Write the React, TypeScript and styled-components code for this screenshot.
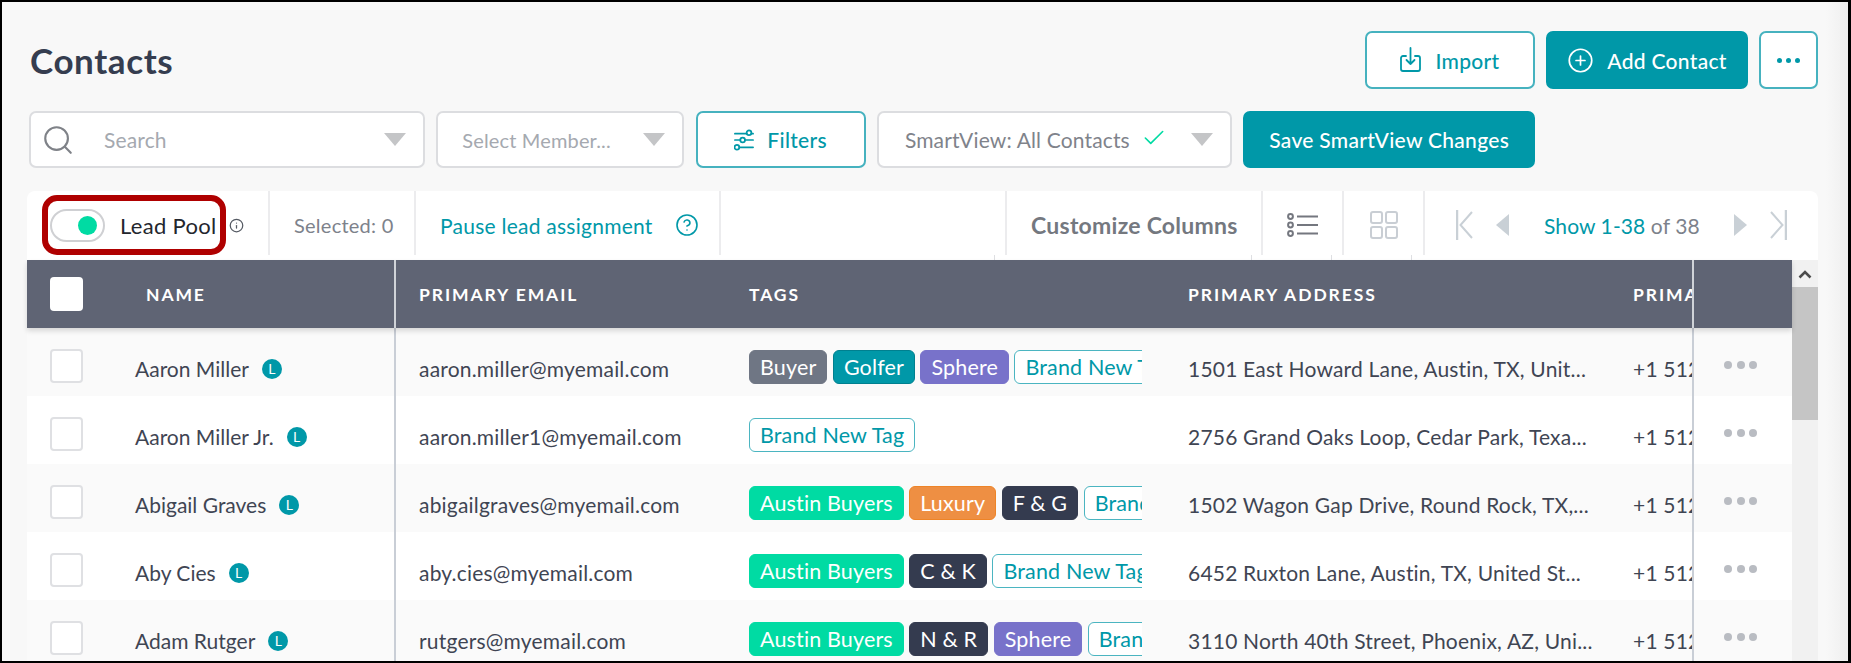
import React from "react";
import styled, { createGlobalStyle } from "styled-components";
import { Search, Check, CirclePlus, CircleHelp, Info } from "lucide-react";

const TEAL = "#0098a8";
const FONT = `"Lato", "Open Sans", sans-serif`;

const GlobalStyle = createGlobalStyle`
  html, body { margin: 0; padding: 0; background: #000; }
  * { box-sizing: border-box; }
`;

const Frame = styled.div`
  width: 1851px;
  height: 663px;
  border: solid #000;
  border-width: 2px 3px 2px 2px;
  background: linear-gradient(90deg, #f8f8f8 98.8%, #efefef 100%);
  overflow: hidden;
  font-family: ${FONT};
  display: flex;
  flex-direction: column;
`;

const TitleRow = styled.div`
  display: flex;
  align-items: center;
  justify-content: space-between;
  height: 58px;
  margin: 29px 30px 0 28px;
`;

const Title = styled.h1`
  margin: 0;
  font-size: 35px;
  font-weight: 700;
  color: #353d4f;
  letter-spacing: 0.6px;
`;

const ActionGroup = styled.div`
  display: flex;
  gap: 11px;
`;

const Button = styled.button<{ $w: number; $solid?: boolean; $h?: number }>`
  width: ${(p) => p.$w}px;
  height: ${(p) => p.$h ?? 58}px;
  display: flex;
  align-items: center;
  justify-content: center;
  gap: 13px;
  border: 2px solid ${(p) => (p.$solid ? TEAL : "#46b2bf")};
  border-radius: 7px;
  background: ${(p) => (p.$solid ? TEAL : "#fff")};
  color: ${(p) => (p.$solid ? "#fff" : TEAL)};
  font-family: ${FONT};
  font-size: 21px;
  font-weight: 500;
  letter-spacing: 0.3px;
  padding: 0;
`;

const DotsIcon = styled.span`
  display: flex;
  gap: 4px;
  i {
    width: 5px;
    height: 5px;
    border-radius: 50%;
    background: ${TEAL};
  }
`;

const FilterRow = styled.div`
  display: flex;
  align-items: center;
  gap: 11.3px;
  height: 57px;
  margin: 22px 0 0 27px;
`;

const Select = styled.div<{ $w: number }>`
  width: ${(p) => p.$w}px;
  height: 57px;
  display: flex;
  align-items: center;
  background: #fff;
  border: 2px solid #dcdde0;
  border-radius: 7px;
  padding: 0 17px 0 10px;
`;

const Placeholder = styled.span<{ $dark?: boolean }>`
  font-size: 21px;
  color: ${(p) => (p.$dark ? "#7f838b" : "#a5a9b0")};
  letter-spacing: 0.15px;
`;

const Caret = styled.span`
  margin-left: auto;
  width: 0;
  height: 0;
  border-left: 11.5px solid transparent;
  border-right: 11.5px solid transparent;
  border-top: 13px solid #c4c5c7;
`;

const Panel = styled.div`
  width: 1791px;
  margin: 23px 0 0 25px;
  background: #fff;
  border-radius: 8px 8px 0 0;
  flex: 1;
  min-height: 0;
`;

const Toolbar = styled.div`
  position: relative;
  display: flex;
  height: 64px;
  margin-left: 2px;
  margin-bottom: 5px;
`;

const ToolCell = styled.div<{ $w: number; $open?: boolean }>`
  width: ${(p) => p.$w}px;
  flex: none;
  display: flex;
  align-items: center;
  padding-top: 4px;
  border-right: ${(p) => (p.$open ? "none" : "2px solid #ececee")};
`;

const ToolTick = styled.span<{ $x: number }>`
  position: absolute;
  top: 64px;
  left: ${(p) => p.$x}px;
  width: 1px;
  height: 5px;
  background: #dedfe2;
`;

const Toggle = styled.span`
  position: relative;
  width: 55px;
  height: 33px;
  margin: 0 15px 0 21px;
  border: 2px solid #cfd0d3;
  border-radius: 17px;
  background: #fff;
  &::after {
    content: "";
    position: absolute;
    top: 5px;
    right: 6px;
    width: 19px;
    height: 19px;
    border-radius: 50%;
    background: #00dba3;
    box-shadow: 0 0 0 5px #fff;
  }
`;

const LeadLabel = styled.span`
  font-size: 22px;
  color: #23262d;
  letter-spacing: 0.3px;
  margin-right: 13px;
`;

const Highlight = styled.span`
  position: absolute;
  left: 13px;
  top: 4px;
  width: 184px;
  height: 60px;
  border: 6px solid #af0000;
  border-radius: 15px;
  pointer-events: none;
`;

const Muted = styled.span`
  font-size: 20px;
  color: #7d828b;
  letter-spacing: 0.25px;
`;

const TealText = styled.span`
  font-size: 21px;
  color: ${TEAL};
  letter-spacing: 0.25px;
`;

const Customize = styled.span`
  font-size: 23px;
  font-weight: 700;
  color: #74787f;
  letter-spacing: 0.25px;
`;

const Body = styled.div`
  display: flex;
  height: 500px;
`;

const Table = styled.div`
  width: 1765px;
  flex: none;
`;

const Columns = styled.div<{ $kind: "head" | "odd" | "even" }>`
  display: grid;
  grid-template-columns: 369px 330px 439px 445px 84px 98px;
  height: 68px;
  background: ${(p) => (p.$kind === "head" ? "#5f6474" : p.$kind === "odd" ? "#fafafa" : "#fff")};
  ${(p) => p.$kind === "head" && "position: relative; box-shadow: 0 3px 5px rgba(0,0,0,.14);"}
`;

const Cell = styled.div<{ $head?: boolean; $divider?: boolean }>`
  display: flex;
  align-items: center;
  min-width: 0;
  overflow: hidden;
  white-space: nowrap;
  padding-left: 23px;
  padding-top: ${(p) => (p.$head ? "0" : "13px")};
  font-size: 21px;
  color: #3f4553;
  letter-spacing: 0.2px;
  ${(p) => p.$divider && `border-right: 2px solid ${p.$head ? "#d0d3d8" : "#c9ced6"};`}
`;

const HeadText = styled.span`
  font-size: 17.5px;
  font-weight: 700;
  color: #fff;
  letter-spacing: 1.9px;
`;

const Box = styled.span<{ $head?: boolean }>`
  flex: none;
  width: 33px;
  height: 34px;
  margin-top: ${(p) => (p.$head ? "0" : "-5px")};
  background: #fff;
  border: ${(p) => (p.$head ? "none" : "2px solid #dfe0e3")};
  border-radius: 4px;
`;

const NameText = styled.span`
  margin-left: 52px;
  letter-spacing: 0;
  color: #3f4553;
`;

const HeadName = styled(HeadText)`
  margin-left: 63px;
`;

const Badge = styled.span`
  flex: none;
  width: 20px;
  height: 20px;
  margin-left: 13px;
  border-radius: 50%;
  background: ${TEAL};
  color: #fff;
  font-size: 14px;
  font-weight: 400;
  letter-spacing: 0;
  display: flex;
  align-items: center;
  justify-content: center;
`;

const tagColors = {
  gray: { bg: "#6f7684", border: "#6f7684", color: "#fff" },
  teal: { bg: TEAL, border: "#00808f", color: "#fff" },
  purple: { bg: "#7872ca", border: "#7872ca", color: "#fff" },
  green: { bg: "#00dba3", border: "#00dba3", color: "#fff" },
  orange: { bg: "#ee8f43", border: "#ee8427", color: "#fff" },
  dark: { bg: "#343b4f", border: "#343b4f", color: "#fff" },
  line: { bg: "#fff", border: "#4bb5c1", color: TEAL },
};

type TagKind = keyof typeof tagColors;

const TagClip = styled.div`
  display: flex;
  gap: 5.5px;
  width: 393px;
  overflow: hidden;
  margin-top: -8px;
  padding: 4px 0 0;
`;

const Tag = styled.span<{ $kind: TagKind }>`
  flex: none;
  height: 34px;
  display: flex;
  align-items: center;
  padding: 0 10px;
  border-radius: 6px;
  border: 1px solid ${(p) => tagColors[p.$kind].border};
  background: ${(p) => tagColors[p.$kind].bg};
  color: ${(p) => tagColors[p.$kind].color};
  font-size: 21.5px;
  letter-spacing: 0.15px;
`;

const RowDots = styled.div`
  display: flex;
  gap: 4.5px;
  padding: 0 0 8px 7px;
  align-items: center;
  i {
    width: 8px;
    height: 8px;
    border-radius: 50%;
    background: #b9bcc2;
  }
`;

const Scrollbar = styled.div`
  width: 26px;
  flex: none;
  background: #f1f1f1;
  display: flex;
  flex-direction: column;
`;

const ScrollArrow = styled.div`
  height: 27px;
  display: flex;
  align-items: center;
  justify-content: center;
`;

const ScrollThumb = styled.div`
  height: 133px;
  background: #c5c5c5;
`;

const rows: {
  name: string;
  email: string;
  tags: [string, TagKind][];
  address: string;
}[] = [
  {
    name: "Aaron Miller",
    email: "aaron.miller@myemail.com",
    tags: [["Buyer", "gray"], ["Golfer", "teal"], ["Sphere", "purple"], ["Brand New Tag", "line"]],
    address: "1501 East Howard Lane, Austin, TX, Unit...",
  },
  {
    name: "Aaron Miller Jr.",
    email: "aaron.miller1@myemail.com",
    tags: [["Brand New Tag", "line"]],
    address: "2756 Grand Oaks Loop, Cedar Park, Texa...",
  },
  {
    name: "Abigail Graves",
    email: "abigailgraves@myemail.com",
    tags: [["Austin Buyers", "green"], ["Luxury", "orange"], ["F & G", "dark"], ["Brand New Tag", "line"]],
    address: "1502 Wagon Gap Drive, Round Rock, TX,...",
  },
  {
    name: "Aby Cies",
    email: "aby.cies@myemail.com",
    tags: [["Austin Buyers", "green"], ["C & K", "dark"], ["Brand New Tag", "line"]],
    address: "6452 Ruxton Lane, Austin, TX, United St...",
  },
  {
    name: "Adam Rutger",
    email: "rutgers@myemail.com",
    tags: [["Austin Buyers", "green"], ["N & R", "dark"], ["Sphere", "purple"], ["Brand New Tag", "line"]],
    address: "3110 North 40th Street, Phoenix, AZ, Uni...",
  },
];

const ImportIcon = () => (
  <svg width="22" height="26" viewBox="0 0 22 26" fill="none" stroke={TEAL} strokeWidth="1.8" strokeLinecap="round" strokeLinejoin="round">
    <path d="M6 9H3a2 2 0 0 0-2 2v11a2 2 0 0 0 2 2h15a2 2 0 0 0 2-2V11a2 2 0 0 0-2-2h-3" />
    <path d="M10.5 1v16M6.5 13l4 4 4-4" />
  </svg>
);

const FilterIcon = () => (
  <svg width="20" height="24" viewBox="0 0 22 24" fill="none" stroke={TEAL} strokeWidth="1.9" strokeLinecap="round">
    <path d="M1 5h13M19 5h2M1 12h6M12 12h9M6 20H21" />
    <circle cx="16.5" cy="4" r="2.6" />
    <circle cx="9.5" cy="12" r="2.6" />
    <circle cx="3.2" cy="20" r="2.6" />
  </svg>
);

const ListIcon = () => (
  <svg width="31" height="24" viewBox="0 0 31 24" fill="none" stroke="#74777f" strokeWidth="2">
    <circle cx="3.5" cy="3.5" r="2.4" />
    <circle cx="3.5" cy="12" r="2.4" />
    <circle cx="3.5" cy="20.5" r="2.4" />
    <path d="M10 3.5h21M10 12h21M10 20.5h21" />
  </svg>
);

const GridIcon = () => (
  <svg width="28" height="28" viewBox="0 0 28 28" fill="none" stroke="#c9ced4" strokeWidth="2">
    <rect x="1" y="1" width="11" height="11" rx="2" />
    <rect x="16" y="1" width="11" height="11" rx="2" />
    <rect x="1" y="16" width="11" height="11" rx="2" />
    <rect x="16" y="16" width="11" height="11" rx="2" />
  </svg>
);

const Flip = styled.span<{ $flip?: boolean }>`
  display: flex;
  ${(p) => p.$flip && "transform: scaleX(-1);"}
`;

// first / last page and prev / next arrows of the pager
const PagerEdge = ({ flip }: { flip?: boolean }) => (
  <Flip $flip={flip}>
    <svg width="17" height="30" viewBox="0 0 17 30" fill="none" stroke="#c9d0d6" strokeWidth="2">
      <path d="M1 0v30" strokeWidth="2.5" />
      <path d="M16 2 4.5 15 16 28" />
    </svg>
  </Flip>
);

const PagerArrow = ({ flip }: { flip?: boolean }) => (
  <Flip $flip={flip}>
    <svg width="13" height="22" viewBox="0 0 13 22" fill="#c9d0d6">
      <path d="M13 0v22L0 11z" />
    </svg>
  </Flip>
);

const Pager = styled.div`
  display: flex;
  align-items: center;
  gap: 23px;
  padding-left: 31px;
`;

const PagerLabel = styled.span`
  width: 179px;
  padding-left: 12px;
  font-size: 21px;
  letter-spacing: 0.1px;
  white-space: nowrap;
  color: #7d828b;
  b {
    color: ${TEAL};
    font-weight: 400;
  }
`;

const PauseHelp = styled.span`
  display: flex;
  margin-left: 22px;
`;

const PaddedCell = styled(ToolCell)`
  padding-left: 24px;
`;

const CenterCell = styled(ToolCell)`
  justify-content: center;
`;

const SearchGap = styled.span`
  display: flex;
  margin-right: 29px;
`;

const CheckMark = styled.span`
  display: flex;
  margin: 0 0 4px 11px;
`;

const MemberText = styled(Placeholder)`
  margin-left: 14px;
  font-size: 20px;
`;

const SmartText = styled(Placeholder)`
  margin-left: 16px;
`;

export default function App() {
  return (
    <>
      <GlobalStyle />
      <Frame>
        <TitleRow>
          <Title>Contacts</Title>
          <ActionGroup>
            <Button $w={170}>
              <ImportIcon />
              Import
            </Button>
            <Button $w={202} $solid>
              <CirclePlus size={27} strokeWidth={1.5} />
              Add Contact
            </Button>
            <Button $w={59}>
              <DotsIcon>
                <i />
                <i />
                <i />
              </DotsIcon>
            </Button>
          </ActionGroup>
        </TitleRow>

        <FilterRow>
          <Select $w={396}>
            <SearchGap>
              <Search size={34} color="#7f8288" strokeWidth={1.5} />
            </SearchGap>
            <Placeholder>Search</Placeholder>
            <Caret />
          </Select>
          <Select $w={248}>
            <MemberText>Select Member...</MemberText>
            <Caret />
          </Select>
          <Button $w={170} $h={57}>
            <FilterIcon />
            Filters
          </Button>
          <Select $w={355}>
            <SmartText $dark>SmartView: All Contacts</SmartText>
            <CheckMark>
              <Check size={26} color="#00dba3" strokeWidth={1.5} />
            </CheckMark>
            <Caret />
          </Select>
          <Button $w={292} $h={57} $solid>
            Save SmartView Changes
          </Button>
        </FilterRow>

        <Panel>
          <Toolbar>
            <ToolCell $w={241}>
              <Toggle />
              <LeadLabel>Lead Pool</LeadLabel>
              <Info size={15} color="#555a63" strokeWidth={2} />
            </ToolCell>
            <PaddedCell $w={146}>
              <Muted>Selected: 0</Muted>
            </PaddedCell>
            <PaddedCell $w={305}>
              <TealText>Pause lead assignment</TealText>
              <PauseHelp>
                <CircleHelp size={24} color={TEAL} strokeWidth={1.6} />
              </PauseHelp>
            </PaddedCell>
            <ToolCell $w={286} />
            <PaddedCell $w={256}>
              <Customize>Customize Columns</Customize>
            </PaddedCell>
            <CenterCell $w={81}>
              <ListIcon />
            </CenterCell>
            <CenterCell $w={81}>
              <GridIcon />
            </CenterCell>
            <ToolCell $w={393} $open>
              <Pager>
                <PagerEdge />
                <PagerArrow />
                <PagerLabel>
                  <b>Show 1-38</b> of 38
                </PagerLabel>
                <PagerArrow flip />
                <PagerEdge flip />
              </Pager>
            </ToolCell>
            <Highlight />
            <ToolTick $x={965} />
            <ToolTick $x={1222} />
            <ToolTick $x={1302} />
            <ToolTick $x={1382} />
          </Toolbar>

          <Body>
            <Table>
              <Columns $kind="head">
                <Cell $head $divider>
                  <Box $head />
                  <HeadName>NAME</HeadName>
                </Cell>
                <Cell $head><HeadText>PRIMARY EMAIL</HeadText></Cell>
                <Cell $head><HeadText>TAGS</HeadText></Cell>
                <Cell $head><HeadText>PRIMARY ADDRESS</HeadText></Cell>
                <Cell $head $divider><HeadText>PRIMARY PHONE</HeadText></Cell>
                <Cell $head />
              </Columns>
              {rows.map((row, i) => (
                <Columns key={row.email} $kind={i % 2 === 0 ? "odd" : "even"}>
                  <Cell $divider>
                    <Box />
                    <NameText>{row.name}</NameText>
                    <Badge>L</Badge>
                  </Cell>
                  <Cell>{row.email}</Cell>
                  <Cell>
                    <TagClip>
                      {row.tags.map(([label, kind]) => (
                        <Tag key={label} $kind={kind}>{label}</Tag>
                      ))}
                    </TagClip>
                  </Cell>
                  <Cell>{row.address}</Cell>
                  <Cell $divider>+1 512-555-0100</Cell>
                  <Cell>
                    <RowDots>
                      <i />
                      <i />
                      <i />
                    </RowDots>
                  </Cell>
                </Columns>
              ))}
            </Table>
            <Scrollbar>
              <ScrollArrow>
                <svg width="14" height="10" viewBox="0 0 14 10" fill="none" stroke="#4c4c4c" strokeWidth="2.6">
                  <path d="M1.5 8.5 7 3l5.5 5.5" />
                </svg>
              </ScrollArrow>
              <ScrollThumb />
            </Scrollbar>
          </Body>
        </Panel>
      </Frame>
    </>
  );
}
